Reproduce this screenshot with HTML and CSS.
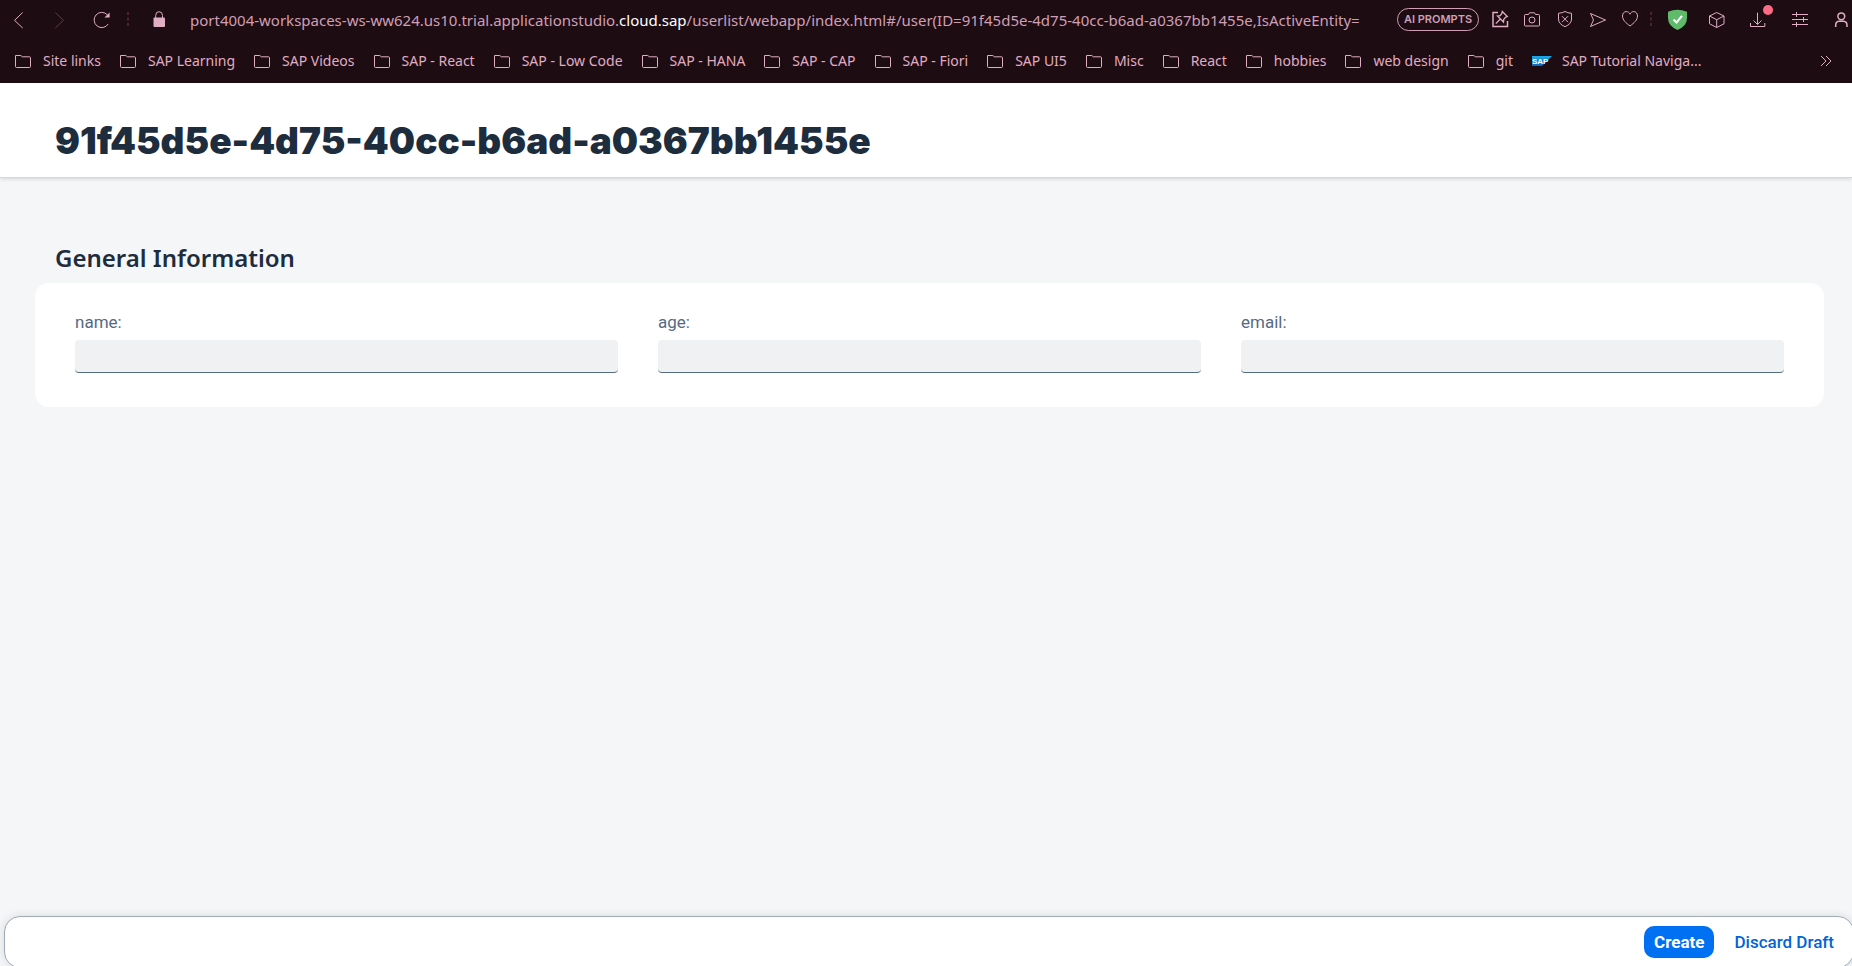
FILE: index.html
```html
<!DOCTYPE html>
<html lang="en">
<head>
<meta charset="utf-8">
<title>91f45d5e-4d75-40cc-b6ad-a0367bb1455e</title>
<link rel="stylesheet" href="styles.css">
</head>
<body>
<svg class="defs" width="0" height="0" aria-hidden="true">
  <symbol id="folder" viewBox="0 0 16 14"><path d="M.5 1.5H5.8L7.3 2.8H14.5Q15.5 2.8 15.5 3.8V12.5Q15.5 13.5 14.5 13.5H1.5Q.5 13.5 .5 12.5Z"/></symbol>
</svg>
<header class="browser">
  <div class="toolbar">
    <div class="nav">
      <button class="icon" aria-label="Back"><svg viewBox="0 0 20 20"><path d="M14.7 3.5 6.5 11.3 14.7 19"/></svg></button>
      <button class="icon dim" aria-label="Forward"><svg viewBox="0 0 20 20"><path d="M6.3 3.5 14.5 11.3 6.3 19"/></svg></button>
      <button class="icon" aria-label="Reload"><svg viewBox="0 0 20 20"><path d="M18.2 15A7.6 7.6 0 1 1 17.3 5.8"/><path class="solid" d="M19.6 3.5V8.6H14.4L16.5 6.4Z"/></svg></button>
    </div>
    <svg class="dots" viewBox="0 0 4 14"><path d="M2 0V3M2 5.500V8.500M2 11V14"/></svg>
    <button class="icon lock" aria-label="Site security"><svg viewBox="0 0 20 20"><path d="M6.700 9V6.500a3.400 3.800 0 0 1 6.800 0V9"/><rect class="solid" x="4.500" y="8.500" width="11.500" height="9.500" rx="1"/></svg></button>
    <div class="address" role="textbox" aria-label="Address" tabindex="0">port4004-workspaces-ws-ww624.us10.trial.applicationstudio.<span class="domain">cloud.sap</span>/userlist/webapp/index.html#/user(ID=91f45d5e-4d75-40cc-b6ad-a0367bb1455e,IsActiveEntity=</div>
    <div class="page-actions">
      <button class="prompts">AI PROMPTS</button>
      <button class="icon" aria-label="Pin"><svg viewBox="0 0 20 20"><path stroke-width="1.500" d="M7 3.500H2V17.400H16.500V12"/><path stroke-width="1.300" d="M11.300 2.500 16.300 7.500 14.700 8.100 12.800 10.200 12.500 13 6.500 7 9.200 6.700 10.900 4.500ZM9.300 10 4.800 14.600"/></svg></button>
      <button class="icon" aria-label="Snapshot"><svg viewBox="0 0 20 20"><path d="M2.500 5.500H5.500L6.500 3.800H11.500L12.500 5.500H15.500Q16.500 5.500 16.500 6.500V16Q16.500 17 15.500 17H2.500Q1.500 17 1.500 16V6.500Q1.500 5.500 2.500 5.500Z"/><circle cx="9" cy="11" r="3"/></svg></button>
      <button class="icon" aria-label="Shield"><svg viewBox="0 0 20 20"><path d="M10 2.500Q12.500 4 16.500 4.300V10Q16.500 15 10 17.700Q3.500 15 3.500 10V4.300Q7.500 4 10 2.500ZM7 7.200 13 13.200M13 7.200 7 13.200"/></svg></button>
      <button class="icon" aria-label="Send"><svg viewBox="0 0 20 20"><path d="M3.500 4.500 18.500 11 3.500 17.500 6.500 11Z"/></svg></button>
      <button class="icon" aria-label="Save"><svg viewBox="0 0 20 20"><path d="M11 17C7 14 3.500 11 3.500 7C3.500 4.300 5.200 2.600 7.200 2.600C9 2.600 10.300 3.600 11 5.200C11.700 3.600 13 2.600 14.800 2.600C16.800 2.600 18.500 4.300 18.500 7C18.500 11 15 14 11 17Z"/></svg></button>
    </div>
    <svg class="dots" viewBox="0 0 4 14"><path d="M2 0V3M2 5.500V8.500M2 11V14"/></svg>
    <div class="extensions">
      <button class="icon" aria-label="Ad blocker"><svg viewBox="0 0 20 20"><path class="green" d="M10.500 .7Q15 .7 20 2.800V9Q20 17 10.500 21Q1 17 1 9V2.800Q6 .7 10.500 .7Z"/><path class="check" d="M6.500 10.500 9.500 13.500 15 6.800"/></svg></button>
      <button class="icon" aria-label="Extensions"><svg viewBox="0 0 20 20"><path d="M8.700 3.500 16 7V14.800L8.700 18.500 1.500 14.800V7ZM1.500 7 8.700 10.700 16 7M8.700 10.700V18.500"/></svg></button>
      <button class="icon" aria-label="Downloads"><svg viewBox="0 0 20 20"><path d="M8.500 3.700V15.500M4.500 11.500 8.500 15.500 12.500 11.500M1.500 14V17.500H15.800V14"/><circle class="alert" cx="19" cy="1" r="5"/></svg></button>
      <button class="icon" aria-label="Easy setup"><svg viewBox="0 0 20 20"><path d="M2 5.500H18M2 10.500H18M2 15.500H18M6.500 3V8M13.500 8V13M6.500 13V18"/></svg></button>
      <button class="icon" aria-label="Profile"><svg viewBox="0 0 20 20"><circle stroke-width="1.500" cx="10.300" cy="7.300" r="3.400"/><path stroke-width="1.500" d="M4.700 18V16.500Q4.700 12.500 8 12.300H12.600Q16 12.500 16 16.500V18"/></svg></button>
    </div>
  </div>
  <nav class="bookmarks" aria-label="Bookmarks">
    <a href="#"><svg class="folder"><use href="#folder"/></svg>Site links</a>
    <a href="#"><svg class="folder"><use href="#folder"/></svg>SAP Learning</a>
    <a href="#"><svg class="folder"><use href="#folder"/></svg>SAP Videos</a>
    <a href="#"><svg class="folder"><use href="#folder"/></svg>SAP - React</a>
    <a href="#"><svg class="folder"><use href="#folder"/></svg>SAP - Low Code</a>
    <a href="#"><svg class="folder"><use href="#folder"/></svg>SAP - HANA</a>
    <a href="#"><svg class="folder"><use href="#folder"/></svg>SAP - CAP</a>
    <a href="#"><svg class="folder"><use href="#folder"/></svg>SAP - Fiori</a>
    <a href="#"><svg class="folder"><use href="#folder"/></svg>SAP UI5</a>
    <a href="#"><svg class="folder"><use href="#folder"/></svg>Misc</a>
    <a href="#"><svg class="folder"><use href="#folder"/></svg>React</a>
    <a href="#"><svg class="folder"><use href="#folder"/></svg>hobbies</a>
    <a href="#"><svg class="folder"><use href="#folder"/></svg>web design</a>
    <a href="#"><svg class="folder"><use href="#folder"/></svg>git</a>
    <a class="tutorial" href="#"><svg class="sap" viewBox="0 0 20 10"><defs><linearGradient id="sapblue" x2="0" y2="1"><stop stop-color="#1ba8e4"/><stop offset="1" stop-color="#1463b4"/></linearGradient></defs><path fill="url(#sapblue)" d="M0 0H20L10 10H0Z"/><text x="0" y="8">SAP</text></svg>SAP Tutorial Naviga...</a>
    <button class="more" aria-label="More bookmarks"><svg viewBox="0 0 12 12"><path d="M1 1 6 6 1 11M6 1 11 6 6 11"/></svg></button>
  </nav>
</header>
<main class="page">
  <div class="page-header"><h1>91f45d5e-4d75-40cc-b6ad-a0367bb1455e</h1></div>
  <section class="section">
    <h2>General Information</h2>
    <form class="card" id="user">
      <div class="field"><label for="name">name:</label><input id="name" type="text"></div>
      <div class="field"><label for="age">age:</label><input id="age" type="text"></div>
      <div class="field"><label for="email">email:</label><input id="email" type="text"></div>
    </form>
  </section>
</main>
<footer class="actions">
  <button class="btn primary" form="user">Create</button>
  <button class="btn" type="button">Discard Draft</button>
</footer>
</body>
</html>
```

FILE: styles.css
```css
* { box-sizing: border-box; }

body {
  margin: 0;
  height: 100vh;
  display: flex;
  flex-direction: column;
  overflow: hidden;
  background: #f5f6f7;
  color: #1d2d3e;
  font-family: Roboto, "Liberation Sans", sans-serif;
}

button { border: 0; padding: 0; background: none; color: inherit; font: inherit; }
h1, h2 { margin: 0; }
.defs { position: absolute; }

/* Browser chrome */
.browser {
  background: #1e0c13;
  color: #e0adc2;
  font-family: "Noto Sans", "Open Sans", sans-serif;
}
.browser svg { fill: none; stroke: currentColor; display: block; flex: none; overflow: visible; }
.toolbar { height: 38px; display: flex; align-items: center; padding: 0 1px 0 8px; }
.nav, .extensions { display: flex; gap: 21px; flex: none; }
.icon { width: 20px; height: 20px; flex: none; }
.icon svg { width: 20px; height: 20px; }
.icon .solid { fill: currentColor; stroke: none; }
.icon .green { fill: #5fba6a; stroke: none; }
.icon .check { stroke: #fff; stroke-width: 2; }
.icon .alert { fill: #ff6b86; stroke: none; }
.dim { color: #5d3a49; }
.dots { width: 4px; height: 14px; margin: 0 14px 0 10px; color: #4a2434; stroke-width: 2; }
.nav + .dots { margin: 0 19px 0 16px; }
.address {
  flex: 1;
  min-width: 0;
  margin-left: 21px;
  padding-top: 2px;
  overflow: hidden;
  white-space: nowrap;
  font-size: 15px;
  line-height: 24px;
  color: #cf9fb3;
}
.domain { color: #fff; }
.page-actions { display: flex; align-items: center; gap: 12px; flex: none; margin-left: 12px; }
.prompts {
  width: 82px;
  height: 23px;
  border: 1px solid #cf9fb3;
  border-radius: 12px;
  color: #cf9fb3;
  font: 600 11px/20px Inter, sans-serif;
  white-space: nowrap;
}

.bookmarks { height: 45px; display: flex; align-items: center; gap: 19px; padding: 0 20px 0 15px; font-size: 14px; line-height: 20px; }
.bookmarks a { display: flex; align-items: center; gap: 12px; color: inherit; text-decoration: none; white-space: nowrap; }
.bookmarks .tutorial { gap: 10px; }
.folder { width: 16px; height: 14px; }
.sap { width: 20px; height: 10px; }
.bookmarks .sap, .sap text { stroke: none; }
.sap text { fill: #fff; font: 900 8px "Liberation Sans", sans-serif; }
.more { margin-left: auto; }
.more svg { width: 12px; height: 12px; }

/* Object page */
.page { flex: 1; }
.page-header {
  padding: 37px 55px 15px;
  background: #fff;
  box-shadow: 0 1px 0 #d5d8db, 0 2px 4px rgba(34, 53, 72, .16);
}
.page-header h1 { font: 900 37px/42px Inter, sans-serif; }
.section { padding: 67px 28px 0 35px; }
.section h2 { padding: 0 20px; font: 600 24px/28px "Noto Sans", sans-serif; }
.card {
  display: grid;
  grid-template-columns: repeat(3, 1fr);
  gap: 40px;
  margin-top: 11px;
  padding: 27px 40px 34px;
  border-radius: 14px;
  background: #fff;
}
.field { display: flex; flex-direction: column; gap: 6px; }
.field label { font-size: 17px; line-height: 24px; color: #556b82; }
.field input {
  width: 100%;
  height: 33px;
  padding: 0 10px;
  border: 0;
  border-bottom: 1px solid #556b82;
  border-radius: 4px;
  background: #eff1f2;
  font: inherit;
}

.actions {
  display: flex;
  justify-content: flex-end;
  gap: 10px;
  margin: 0 -2px -2px 4px;
  padding: 9px;
  border: 1px solid #9eacba;
  border-radius: 16px;
  background: #fff;
  box-shadow: 0 0 8px rgba(34, 53, 72, .14);
}
.btn { height: 32px; padding: 0 10px; border-radius: 10px; color: #0064d9; font-size: 17px; font-weight: 500; }
.primary { background: #0070f2; color: #fff; font-weight: 700; }
```
